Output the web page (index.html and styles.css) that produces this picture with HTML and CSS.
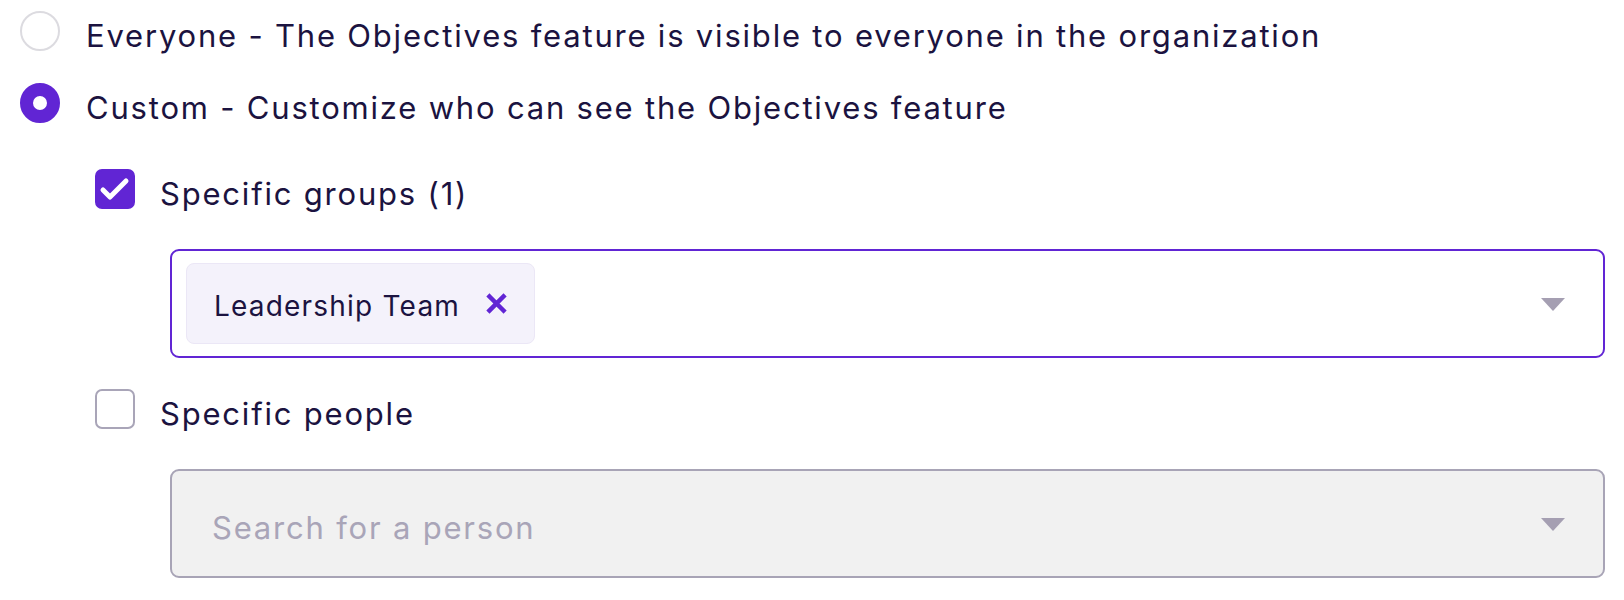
FILE: index.html
```html
<!DOCTYPE html>
<html lang="en">
<head>
    <meta charset="UTF-8">
    <meta name="viewport" content="width=device-width, initial-scale=1.0">
    <title>Objectives visibility</title>
    <link rel="stylesheet" href="styles.css">
</head>
<body>
    <div class="visibility">
        <label class="option">
            <span class="radio"></span>
            <span class="option-text">Everyone - The Objectives feature is visible to everyone in the organization</span>
        </label>
        <label class="option option-custom">
            <span class="radio checked"></span>
            <span class="option-text">Custom - Customize who can see the Objectives feature</span>
        </label>

        <div class="custom-options">
            <label class="option option-groups">
                <span class="checkbox checked">
                    <svg width="36" height="36" viewBox="0 0 36 36">
                        <path d="M6 19 L13 26 L29 10" fill="none" stroke="#fff" stroke-width="5" stroke-linecap="round" stroke-linejoin="round"/>
                    </svg>
                </span>
                <span class="option-text">Specific groups (1)</span>
            </label>
            <div class="select active">
                <span class="chip">
                    Leadership Team
                    <svg class="chip-remove" width="21" height="21" viewBox="0 0 21 21">
                        <path d="M3.5 3.5 L17.5 17.5 M17.5 3.5 L3.5 17.5" stroke="#6125d4" stroke-width="4.5" stroke-linecap="square"/>
                    </svg>
                </span>
                <span class="caret"></span>
            </div>

            <label class="option option-people">
                <span class="checkbox"></span>
                <span class="option-text">Specific people</span>
            </label>
            <div class="select disabled">
                <span class="placeholder">Search for a person</span>
                <span class="caret"></span>
            </div>
        </div>
    </div>
</body>
</html>
```

FILE: styles.css
```css
* {
    margin: 0;
    padding: 0;
    box-sizing: border-box;
}

body {
    background: #fff;
    font-family: "Inter", "Lato", sans-serif;
    color: #1b1340;
}

.visibility {
    padding: 11px 19px 0 20px;
}

.option {
    display: flex;
    align-items: center;
    height: 40px;
    font-size: 31px;
    letter-spacing: 1.8px;
    cursor: pointer;
}

.option-text {
    padding-top: 8px;
}

.option-custom {
    margin-top: 32px;
}

.radio {
    width: 40px;
    height: 40px;
    border-radius: 50%;
    border: 2px solid #dcdbe0;
    margin-right: 26px;
    flex-shrink: 0;
}

.radio.checked {
    border: 13.5px solid #6125d4;
}

.custom-options {
    padding-left: 75px;
}

.option-groups {
    margin-top: 46px;
}

.option-people {
    margin-top: 31px;
}

.checkbox {
    width: 40px;
    height: 40px;
    border-radius: 7px;
    border: 2px solid #a9a5b8;
    margin-right: 25px;
    flex-shrink: 0;
}

.checkbox svg {
    display: block;
}

.checkbox.checked {
    background: #6125d4;
    border-color: #6125d4;
}

.select {
    display: flex;
    align-items: center;
    justify-content: space-between;
    margin: 40px 0 0 75px;
    height: 109px;
    padding: 12px 38px 12px 14px;
    border: 2px solid #a8a4b6;
    border-radius: 9px;
}

.select.active {
    border-color: #6125d4;
}

.select.disabled {
    background: #f1f1f1;
    padding-left: 40px;
}

.chip {
    display: flex;
    align-items: center;
    height: 81px;
    padding: 4px 27px 0 27px;
    background: #f4f2fb;
    border: 1px solid #ebe7f6;
    border-radius: 8px;
    font-size: 28px;
    letter-spacing: 1.2px;
}

.chip-remove {
    margin: -4px 0 0 26px;
}

.placeholder {
    font-size: 31px;
    letter-spacing: 1.8px;
    color: #a9a5b8;
    padding-top: 8px;
}

.caret {
    width: 0;
    height: 0;
    border-left: 12px solid transparent;
    border-right: 12px solid transparent;
    border-top: 13px solid #a59fb2;
    margin-top: 2px;
}
```
